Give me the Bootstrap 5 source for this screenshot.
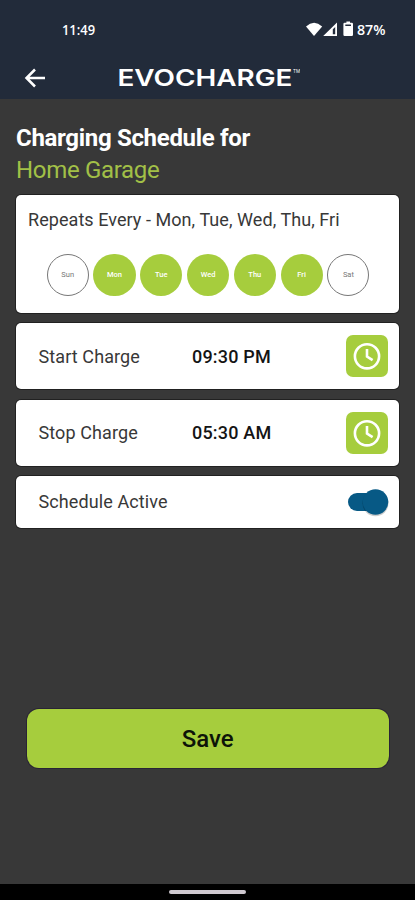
<!DOCTYPE html>
<html lang="en">
<head>
<meta charset="utf-8">
<meta name="viewport" content="width=device-width, initial-scale=1">
<title>Charging Schedule</title>
<link href="https://cdn.jsdelivr.net/npm/bootstrap@5.3.0/dist/css/bootstrap.min.css" rel="stylesheet">
<style>
  body { font-family: Roboto, "Liberation Sans", sans-serif; background: #383838; height: 900px; overflow: hidden; }
  svg { display: block; flex: none; }
  .app-head { background: #222b3a; height: 99px; }
  .status { height: 57px; padding: 3px 28px 0 60px; font-family: "Open Sans", Roboto, sans-serif; font-size: 15px; font-weight: 600; }
  .brand-bar { height: 42px; padding: 0 115px 0 24px; }
  .heading { font-size: 24px; line-height: 32px; padding-top: 23px; margin-bottom: 8.5px; letter-spacing: -.31px; }
  .lime { color: #a2c047; }
  .panel { border-radius: 5px; box-shadow: 0 0 0 1px rgba(0,0,0,.4); color: #383838; font-size: 18px; letter-spacing: .1px; margin-bottom: 10.3px; }
  .panel-days { height: 118.5px; padding: 11px 12px 0; letter-spacing: .06px; }
  .panel-time { height: 66px; padding: 0 11.5px 0 22.5px; }
  .panel-active { height: 52px; padding: 0 10px 0 22.5px; }
  .days { gap: 4.6px; padding: 21.5px 0 0 18.6px; }
  .day { width: 42.2px; height: 42.2px; font-size: 7.5px; letter-spacing: 0; background: #a6cd3d; color: #fff; font-weight: 500; }
  .day.off { background: #fff; color: #777; border: 1px solid #777; font-weight: 400; }
  .t-label { width: 153.5px; }
  .t-value { color: #141414; font-weight: 500; letter-spacing: .2px; }
  .btn-clock { width: 42px; height: 42px; background: #a6cd3d; border-radius: 7px; }
  .save { height: 59px; margin: 171px 10.5px 0 11px; background: #a6cd3d; border-radius: 12px; font-size: 24px; font-weight: 500; color: #0d1408; box-shadow: 0 0 0 1px rgba(25,15,50,.5); }
  .save:hover { background: #9bc036; }
  .nav-strip { height: 16.5px; padding-top: 1px; }
  .pill { width: 77px; height: 4px; border-radius: 2px; background: #cfc9d0; }
</style>
</head>
<body class="d-flex flex-column">
<header class="app-head text-white">
  <div class="status d-flex align-items-center justify-content-between">
    <svg width="40" height="22" viewBox="0 0 40 22" fill="#fff"><text x="2" y="16" textLength="33" lengthAdjust="spacingAndGlyphs">11:49</text></svg>
    <svg width="82" height="22" viewBox="0 0 82 22" fill="#fff">
      <path d="M1 7.5Q9 .2 17.2 7.5L9 17Z"/>
      <path fill-rule="evenodd" d="M32 3.5V17H18.2ZM30.2 8L27.8 10.3V15.3H30.2Z"/>
      <path fill-rule="evenodd" d="M41.4 3.8V2.6H45V3.8H46.8Q48 3.8 48 5V15.8Q48 17 46.8 17H39.6Q38.4 17 38.4 15.8V5Q38.4 3.8 39.6 3.8ZM40.3 5.6V7H46V5.6Z"/>
      <text x="52" y="16" textLength="28.5" lengthAdjust="spacingAndGlyphs">87%</text>
    </svg>
  </div>
  <div class="brand-bar d-flex align-items-center justify-content-between">
    <svg width="22" height="42" viewBox="0 0 22 42" fill="none" stroke="#fff" stroke-width="2.5"><path d="M21 21H2.5M11 12.5L2.5 21L11 29.5"/></svg>
    <svg width="182" height="42" viewBox="0 0 182 42" fill="#fff" font-family="Inter, sans-serif" font-weight="600">
      <text x="-.5" y="29.3" font-size="23.5" textLength="175" lengthAdjust="spacingAndGlyphs">EVOCHARGE</text>
      <text x="175" y="16" font-size="4.5" font-weight="400">TM</text>
    </svg>
  </div>
</header>
<main class="flex-grow-1 px-3">
  <h1 class="heading fw-normal"><span class="d-block fw-bold text-white">Charging Schedule for</span><span class="d-block lime">Home Garage</span></h1>
  <section class="panel panel-days bg-white">
    <div>Repeats Every - Mon, Tue, Wed, Thu, Fri</div>
    <div class="days d-flex">
      <div class="day off rounded-circle d-flex align-items-center justify-content-center">Sun</div>
      <div class="day rounded-circle d-flex align-items-center justify-content-center">Mon</div>
      <div class="day rounded-circle d-flex align-items-center justify-content-center">Tue</div>
      <div class="day rounded-circle d-flex align-items-center justify-content-center">Wed</div>
      <div class="day rounded-circle d-flex align-items-center justify-content-center">Thu</div>
      <div class="day rounded-circle d-flex align-items-center justify-content-center">Fri</div>
      <div class="day off rounded-circle d-flex align-items-center justify-content-center">Sat</div>
    </div>
  </section>
  <section class="panel panel-time bg-white d-flex align-items-center">
    <span class="t-label">Start Charge</span><span class="t-value">09:30 PM</span>
    <button class="btn btn-clock p-0 border-0 ms-auto" aria-label="Set start time"><svg width="42" height="42" fill="none" stroke="#fff" stroke-width="2.6"><circle cx="21" cy="21.3" r="12.1"/><path d="M21 14V21.6L26.6 25.2"/></svg></button>
  </section>
  <section class="panel panel-time bg-white d-flex align-items-center">
    <span class="t-label">Stop Charge</span><span class="t-value">05:30 AM</span>
    <button class="btn btn-clock p-0 border-0 ms-auto" aria-label="Set stop time"><svg width="42" height="42" fill="none" stroke="#fff" stroke-width="2.6"><circle cx="21" cy="21.3" r="12.1"/><path d="M21 14V21.6L26.6 25.2"/></svg></button>
  </section>
  <section class="panel panel-active bg-white d-flex align-items-center">
    <span>Schedule Active</span>
    <svg class="ms-auto" width="42" height="34" role="switch" aria-checked="true"><rect x="1" y="8" width="32" height="18" rx="9" fill="#075985"/><circle cx="28.5" cy="18.3" r="13" fill="#000" opacity=".2"/><circle cx="28.5" cy="17" r="12.8" fill="#075985"/></svg>
  </section>
  <div class="d-grid"><button class="btn save border-0 p-0">Save</button></div>
</main>
<footer class="nav-strip bg-black d-flex align-items-center justify-content-center"><div class="pill"></div></footer>
<script src="https://cdn.jsdelivr.net/npm/bootstrap@5.3.0/dist/js/bootstrap.bundle.min.js"></script>
</body>
</html>
